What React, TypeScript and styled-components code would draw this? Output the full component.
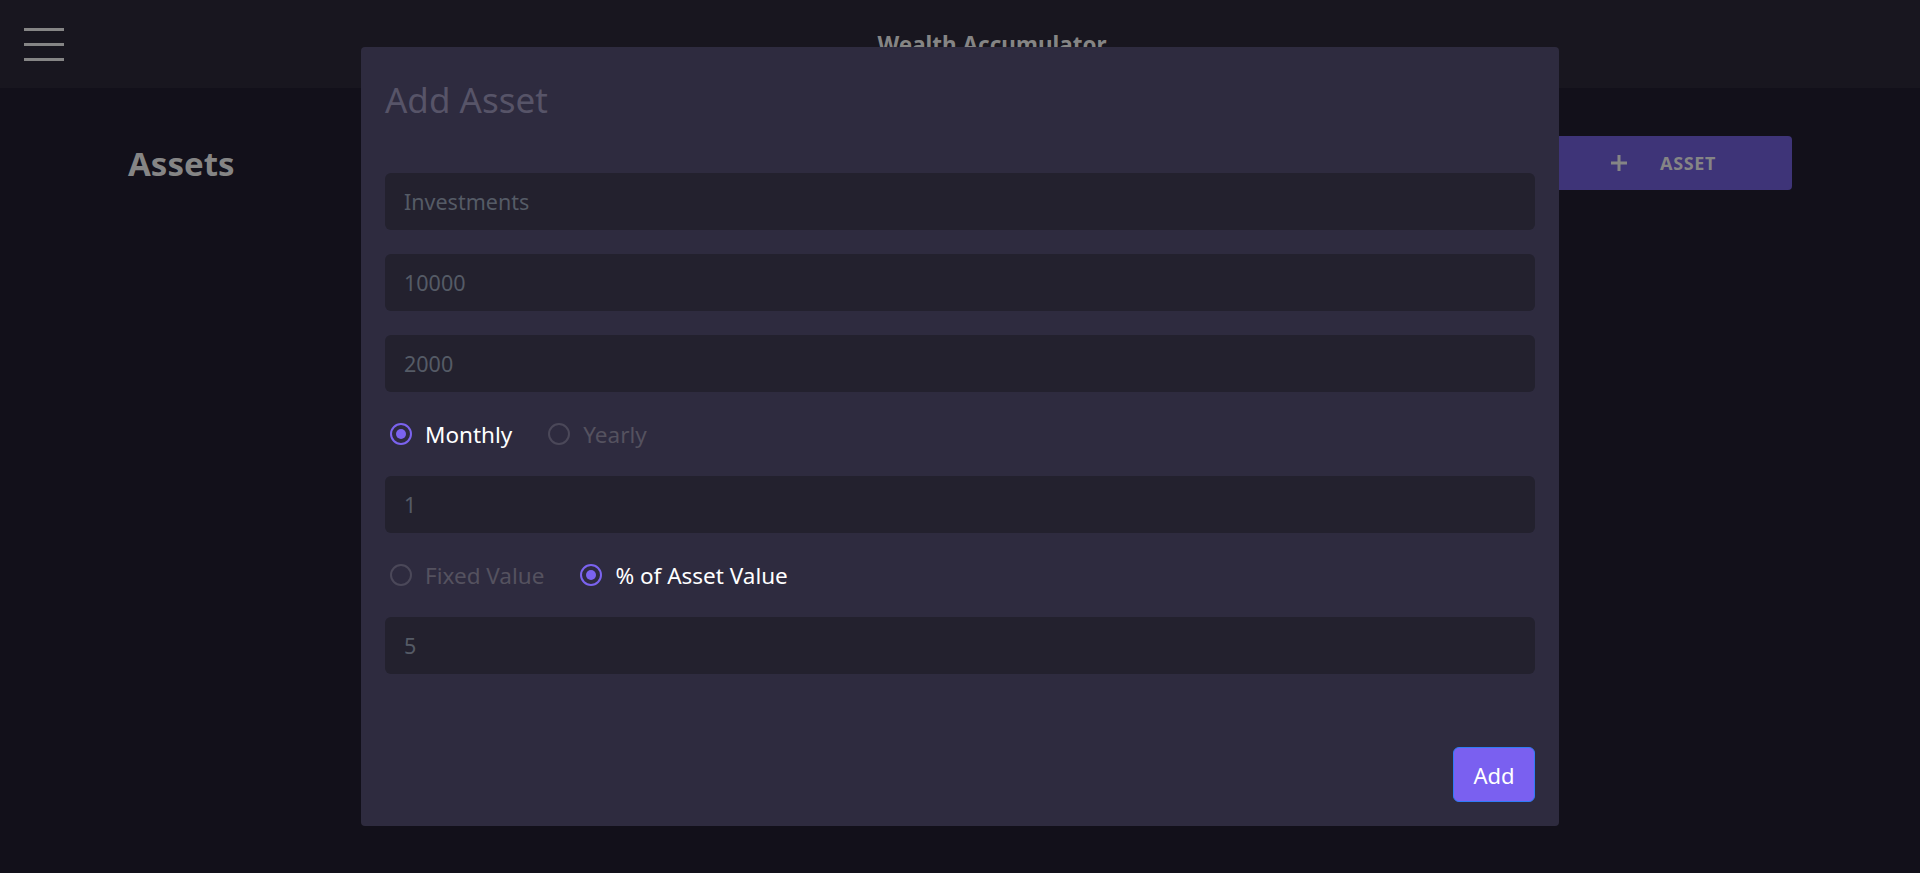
import React from "react";
import styled, { createGlobalStyle } from "styled-components";

const GlobalStyle = createGlobalStyle`
  html, body {
    margin: 0;
    padding: 0;
    background: #12101a;
    font-family: "Noto Sans", "Open Sans", sans-serif;
  }
  * { box-sizing: border-box; }
`;

const Page = styled.div`
  min-height: 873px;
  background: #12101a;
`;

const Header = styled.header`
  height: 88px;
  background: #18161f;
  display: flex;
  align-items: center;
  padding-left: 24px;
`;

const Burger = styled.div`
  width: 40px;
  display: flex;
  flex-direction: column;
  gap: 12px;
`;

const BurgerLine = styled.span`
  display: block;
  height: 3px;
  background: #858585;
`;

const HeaderTitle = styled.h1`
  flex: 1;
  margin: 0;
  text-align: center;
  font-size: 22.5px;
  font-weight: 700;
  color: #858585;
`;

const Main = styled.main`
  padding: 48px 128px 0;
`;

const TopRow = styled.div`
  display: flex;
  align-items: center;
  justify-content: space-between;
`;

const Heading = styled.h2`
  margin: 0;
  font-size: 33px;
  font-weight: 700;
  color: #858585;
`;

const AddAssetButton = styled.button`
  width: 258px;
  height: 54px;
  border: none;
  border-radius: 4px;
  background: #3e3478;
  color: #858585;
  font-family: inherit;
  font-size: 18px;
  letter-spacing: 0.6px;
  font-weight: 700;
  display: flex;
  align-items: center;
  justify-content: center;
  gap: 32px;
`;

const Overlay = styled.div`
  position: fixed;
  inset: 0;
  display: flex;
  justify-content: center;
  align-items: flex-start;
  padding-top: 47px;
`;

const Dialog = styled.div`
  width: 1198px;
  height: 779px;
  background: #2e2b3f;
  border-radius: 4px;
  padding: 24px;
  display: flex;
  flex-direction: column;
`;

const DialogTitle = styled.h3`
  margin: 6px 0 50px;
  height: 46px;
  line-height: 46px;
  font-size: 35px;
  font-weight: 400;
  color: #575468;
`;

const Form = styled.div`
  display: flex;
  flex-direction: column;
  gap: 24px;
`;

const Field = styled.input`
  height: 57px;
  width: 100%;
  border: none;
  outline: none;
  border-radius: 6px;
  background: #23212e;
  padding: 0 19px;
  font-family: inherit;
  font-size: 21.5px;
  color: #555b66;
  &::placeholder {
    color: #555b66;
  }
`;

const RadioRow = styled.div`
  height: 36px;
  display: flex;
  align-items: center;
  gap: 36px;
  padding-left: 5px;
`;

const RadioOption = styled.label`
  display: flex;
  align-items: center;
  gap: 13px;
`;

const RadioCircle = styled.span<{ $checked: boolean }>`
  width: 22px;
  height: 22px;
  border-radius: 50%;
  border: 2.5px solid ${(p) => (p.$checked ? "#7b63ef" : "#4b4859")};
  display: flex;
  align-items: center;
  justify-content: center;
  &::after {
    content: "";
    width: 10px;
    height: 10px;
    border-radius: 50%;
    background: #7b63ef;
    display: ${(p) => (p.$checked ? "block" : "none")};
  }
`;

const RadioLabel = styled.span<{ $checked: boolean }>`
  font-size: 22.5px;
  color: ${(p) => (p.$checked ? "#ffffff" : "#55525f")};
`;

const Footer = styled.div`
  margin-top: auto;
  display: flex;
  justify-content: flex-end;
`;

const SubmitButton = styled.button`
  width: 82px;
  height: 55px;
  border-radius: 6px;
  border: 1px solid #2f7cf6;
  background: #7a60f0;
  color: #ffffff;
  font-family: inherit;
  font-size: 22px;
`;

const PlusIcon = () => (
  <svg width="18" height="18" viewBox="0 0 18 18">
    <path d="M9 1v16M1 9h16" stroke="#858585" strokeWidth="3" />
  </svg>
);

const Radio = ({ label, checked }: { label: string; checked: boolean }) => (
  <RadioOption>
    <RadioCircle $checked={checked} />
    <RadioLabel $checked={checked}>{label}</RadioLabel>
  </RadioOption>
);

const App = () => {
  return (
    <Page>
      <GlobalStyle />
      <Header>
        <Burger>
          <BurgerLine />
          <BurgerLine />
          <BurgerLine />
        </Burger>
        <HeaderTitle>Wealth Accumulator</HeaderTitle>
      </Header>
      <Main>
        <TopRow>
          <Heading>Assets</Heading>
          <AddAssetButton>
            <PlusIcon />
            ASSET
          </AddAssetButton>
        </TopRow>
      </Main>
      <Overlay>
        <Dialog>
          <DialogTitle>Add Asset</DialogTitle>
          <Form>
            <Field placeholder="Investments" />
            <Field placeholder="10000" />
            <Field placeholder="2000" />
            <RadioRow>
              <Radio label="Monthly" checked />
              <Radio label="Yearly" checked={false} />
            </RadioRow>
            <Field placeholder="1" />
            <RadioRow>
              <Radio label="Fixed Value" checked={false} />
              <Radio label="% of Asset Value" checked />
            </RadioRow>
            <Field placeholder="5" />
          </Form>
          <Footer>
            <SubmitButton>Add</SubmitButton>
          </Footer>
        </Dialog>
      </Overlay>
    </Page>
  );
};

export default App;
